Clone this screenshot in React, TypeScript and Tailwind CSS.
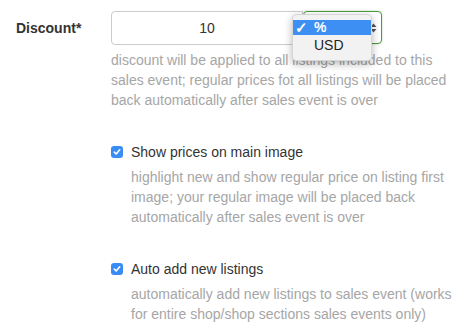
import React from 'react';

function CheckBox() {
  return (
    <span className="mt-[4px] flex h-[12px] w-[12px] shrink-0 items-center justify-center rounded-[3px] bg-[#3a8cf5]">
      <svg width="8" height="8" viewBox="0 0 8 8">
        <path d="M1.3 4.2 L3.2 6 L6.7 1.8" fill="none" stroke="white" strokeWidth="1.6" strokeLinecap="round" strokeLinejoin="round" />
      </svg>
    </span>
  );
}

function Option({ label, help }: { label: string; help: string }) {
  return (
    <div className="flex gap-[8px]">
      <CheckBox />
      <div className="w-[322px]">
        <div className="text-[14px] leading-[20px] text-[#333]">{label}</div>
        <div className="mt-[5px] text-[14px] leading-[20px] text-[#a6a6a6]">{help}</div>
      </div>
    </div>
  );
}

export default function App() {
  return (
    <div className="h-[329px] w-[469px] bg-white font-['Liberation_Sans',Arial,sans-serif]">
      <div className="flex pt-[11px]">
        <div className="w-[111px] pl-[16px] pt-[8px] text-[14px] font-bold leading-[18px] text-[#333]">
          Discount*
        </div>
        <div className="w-[345px]">
          <div className="relative flex">
            <div className="flex h-[34px] w-[192px] items-center justify-center rounded-l-[4px] border border-[#cccccc] text-[14px] text-[#333]">
              10
            </div>
            <div className="flex h-[33px] w-[79px] items-center justify-end rounded-[4px] border border-[#4e9a3e] pr-[4px] shadow-[0_0_2px_rgba(78,154,62,0.5)]">
              <svg width="7" height="12" viewBox="0 0 7 12">
                <path d="M0.5 5 L3.5 1.5 L6.5 5 Z M0.5 7 L3.5 10.5 L6.5 7 Z" fill="#555" />
              </svg>
            </div>
            <div className="absolute left-[181px] top-[3px] w-[80px] rounded-[4px] border border-[#d6d6d6] bg-[#f2f2f2] py-[5px] text-[14px] leading-[15px] shadow-[0_3px_8px_rgba(0,0,0,0.28)]">
              <div className="flex h-[15px] items-center bg-[#3d8ff4] pl-[2px] font-bold text-white">
                <span className="w-[19px] text-[15px]">✓</span>
                <span>%</span>
              </div>
              <div className="flex h-[20px] items-center pl-[21px] text-[#222]">USD</div>
            </div>
          </div>
          <p className="mt-[5px] pr-[6px] text-[14px] leading-[20px] text-[#a6a6a6]">
            discount will be applied to all listings included to this sales event; regular prices fot all listings will be placed back automatically after sales event is over
          </p>
          <div className="mt-[32px] flex flex-col gap-[32px]">
            <Option
              label="Show prices on main image"
              help="highlight new and show regular price on listing first image; your regular image will be placed back automatically after sales event is over"
            />
            <Option
              label="Auto add new listings"
              help="automatically add new listings to sales event (works for entire shop/shop sections sales events only)"
            />
          </div>
        </div>
      </div>
    </div>
  );
}
